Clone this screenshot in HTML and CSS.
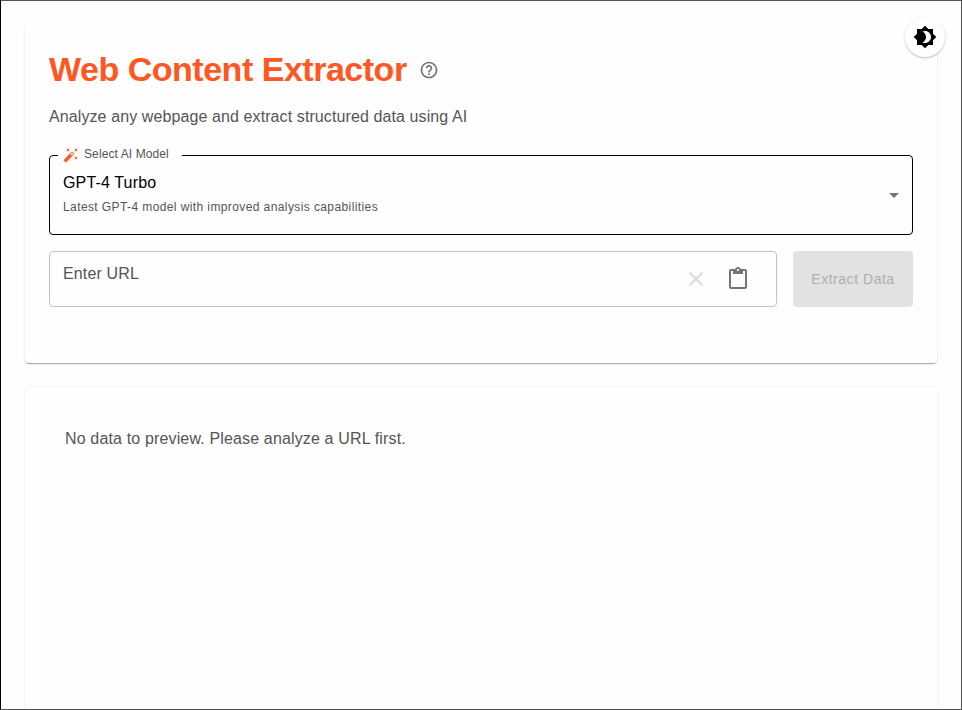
FILE: index.html
```html
<!DOCTYPE html>
<html lang="en">
<head>
<meta charset="utf-8">
<title>Web Content Extractor</title>
<link rel="stylesheet" href="styles.css">
</head>
<body>
<button class="theme-toggle" aria-label="Toggle theme"><svg viewBox="0 0 24 24"><path d="M20 8.69V4h-4.69L12 .69 8.69 4H4v4.69L.69 12 4 15.31V20h4.69L12 23.31 15.31 20H20v-4.69L23.31 12 20 8.69zM12 18c-.89 0-1.74-.2-2.5-.55C11.56 16.5 13 14.42 13 12s-1.44-4.5-3.5-5.45C10.26 6.2 11.11 6 12 6c3.31 0 6 2.69 6 6s-2.69 6-6 6z"/></svg></button>
<main class="page">
  <section class="card form-card">
    <header class="heading">
      <h1 class="title">Web Content Extractor</h1>
      <svg class="help" viewBox="0 0 24 24"><path d="M11 18h2v-2h-2v2zm1-16C6.48 2 2 6.48 2 12s4.48 10 10 10 10-4.48 10-10S17.52 2 12 2zm0 18c-4.41 0-8-3.59-8-8s3.59-8 8-8 8 3.59 8 8-3.59 8-8 8zm0-14c-2.21 0-4 1.79-4 4h2c0-1.1.9-2 2-2s2 .9 2 2c0 2-3 1.75-3 5h2c0-2.25 3-2.5 3-5 0-2.21-1.79-4-4-4z"/></svg>
    </header>
    <p class="subtitle">Analyze any webpage and extract structured data using AI</p>
    <div class="select">
      <div class="legend">
        <svg class="wand" viewBox="0 0 24 24"><path d="M7.5 5.6 10 7 8.6 4.5 10 2 7.5 3.4 5 2l1.4 2.5L5 7zm12 9.8L17 14l1.4 2.5L17 19l2.5-1.4L22 19l-1.4-2.5L22 14zM22 2l-2.5 1.4L17 2l1.4 2.5L17 7l2.5-1.4L22 7l-1.4-2.5zm-7.63 5.29a.996.996 0 0 0-1.41 0L1.29 18.96c-.39.39-.39 1.02 0 1.41l2.34 2.34c.39.39 1.02.39 1.41 0L16.7 11.05c.39-.39.39-1.02 0-1.41l-2.33-2.35zm-1.03 5.49-2.12-2.12 2.44-2.44 2.12 2.12-2.44 2.44z"/></svg>
        <span class="legend-text">Select AI Model</span>
      </div>
      <div class="option">
        <span class="option-name">GPT-4 Turbo</span>
        <span class="option-note">Latest GPT-4 model with improved analysis capabilities</span>
      </div>
      <svg class="arrow" viewBox="0 0 24 24"><path d="m7 10 5 5 5-5z"/></svg>
    </div>
    <div class="url-row">
      <div class="url-field">
        <span class="placeholder">Enter URL</span>
        <svg class="clear" viewBox="0 0 24 24"><path d="M19 6.41 17.59 5 12 10.59 6.41 5 5 6.41 10.59 12 5 17.59 6.41 19 12 13.41 17.59 19 19 17.59 13.41 12z"/></svg>
        <svg class="paste" viewBox="0 0 24 24"><path d="M19 2h-4.18C14.4.84 13.3 0 12 0c-1.3 0-2.4.84-2.82 2H5c-1.1 0-2 .9-2 2v16c0 1.1.9 2 2 2h14c1.1 0 2-.9 2-2V4c0-1.1-.9-2-2-2zm-7 0c.55 0 1 .45 1 1s-.45 1-1 1-1-.45-1-1 .45-1 1-1zm7 18H5V4h2v3h10V4h2v16z"/></svg>
      </div>
      <button class="extract" disabled>Extract Data</button>
    </div>
  </section>
  <section class="card preview-card">
    <p class="empty">No data to preview. Please analyze a URL first.</p>
  </section>
</main>
</body>
</html>
```
FILE: styles.css
```css
* { box-sizing: border-box; }
body {
  margin: 0;
  height: 710px;
  overflow: hidden;
  border: 1px solid #555357;
  border-left-color: #000;
  background: #fefefe;
  font-family: "Liberation Sans", Arial, sans-serif;
  color: #000;
}
svg { display: block; fill: currentColor; flex: none; }
h1, p { margin: 0; }
.page {
  display: flex;
  flex-direction: column;
  gap: 24px;
  padding: 24px 24px 0;
  height: 708px;
  overflow: hidden;
}
.card {
  background: #fefefe;
  border-radius: 4px;
  box-shadow: 0 2px 1px -1px rgba(0,0,0,.2), 0 1px 1px rgba(0,0,0,.14), 0 1px 3px rgba(0,0,0,.08);
}
.form-card { height: 338px; padding: 24px; flex: none; }
.preview-card {
  flex: 1;
  padding: 40px;
  border-radius: 4px 4px 0 0;
  box-shadow: 0 0 2px rgba(0,0,0,.12);
}
.heading { display: flex; align-items: center; height: 42px; gap: 12px; }
.title {
  width: 358px;
  margin-top: -2px;
  font-size: 34px;
  line-height: 42px;
  font-weight: 700;
  letter-spacing: -.48px;
  color: #ff5722;
  white-space: nowrap;
}
.help { width: 20px; height: 20px; color: #757575; }
.subtitle {
  margin-top: 14px;
  height: 24px;
  font-size: 16px;
  line-height: 24px;
  letter-spacing: .1px;
  color: #555;
}
.select {
  position: relative;
  display: flex;
  align-items: center;
  justify-content: space-between;
  margin-top: 26px;
  height: 80px;
  padding: 0 6px 0 13px;
  border: 1px solid #000;
  border-radius: 4px;
}
.legend {
  position: absolute;
  top: -10px;
  left: 8px;
  width: 124px;
  height: 18px;
  padding-left: 5px;
  display: flex;
  align-items: center;
  gap: 5px;
  background: #fefefe;
}
.wand { width: 16px; height: 16px; color: #ff5722; }
.legend-text { margin-top: -2px; font-size: 12px; line-height: 16px; letter-spacing: .1px; color: #555; white-space: nowrap; }
.option { display: flex; flex-direction: column; margin-top: -2px; }
.option-name { font-size: 16px; line-height: 24px; letter-spacing: .15px; }
.option-note { margin-top: 2px; font-size: 12px; line-height: 20px; letter-spacing: .4px; color: #555; }
.arrow { width: 24px; height: 24px; color: #757575; }
.url-row { display: flex; gap: 16px; margin-top: 16px; }
.url-field {
  flex: 1;
  height: 56px;
  display: flex;
  align-items: center;
  padding: 0 26px 0 13px;
  border: 1px solid #c2c2c2;
  border-radius: 4px;
}
.placeholder { flex: 1; font-size: 16px; line-height: 24px; margin-top: -10px; letter-spacing: .15px; color: #555; }
.clear { width: 24px; height: 24px; color: #dadada; margin-right: 18px; }
.paste { width: 24px; height: 24px; color: #757575; }
.extract {
  width: 120px;
  height: 56px;
  padding: 0;
  border: 0;
  border-radius: 4px;
  background: #e2e2e2;
  color: #aeaeae;
  font: 14px "Liberation Sans", Arial, sans-serif;
  letter-spacing: .53px;
}
.empty { font-size: 16px; line-height: 24px; letter-spacing: .15px; color: #555; }
.theme-toggle {
  position: absolute;
  z-index: 2;
  top: 17px;
  left: 905px;
  width: 40px;
  height: 40px;
  padding: 0;
  display: flex;
  align-items: center;
  justify-content: center;
  border: 0;
  border-radius: 50%;
  background: #fefefe;
  color: #000;
  box-shadow: 0 1px 2px rgba(0,0,0,.18), 0 1px 3px rgba(0,0,0,.08);
}
.theme-toggle svg { width: 24px; height: 24px; }
```
